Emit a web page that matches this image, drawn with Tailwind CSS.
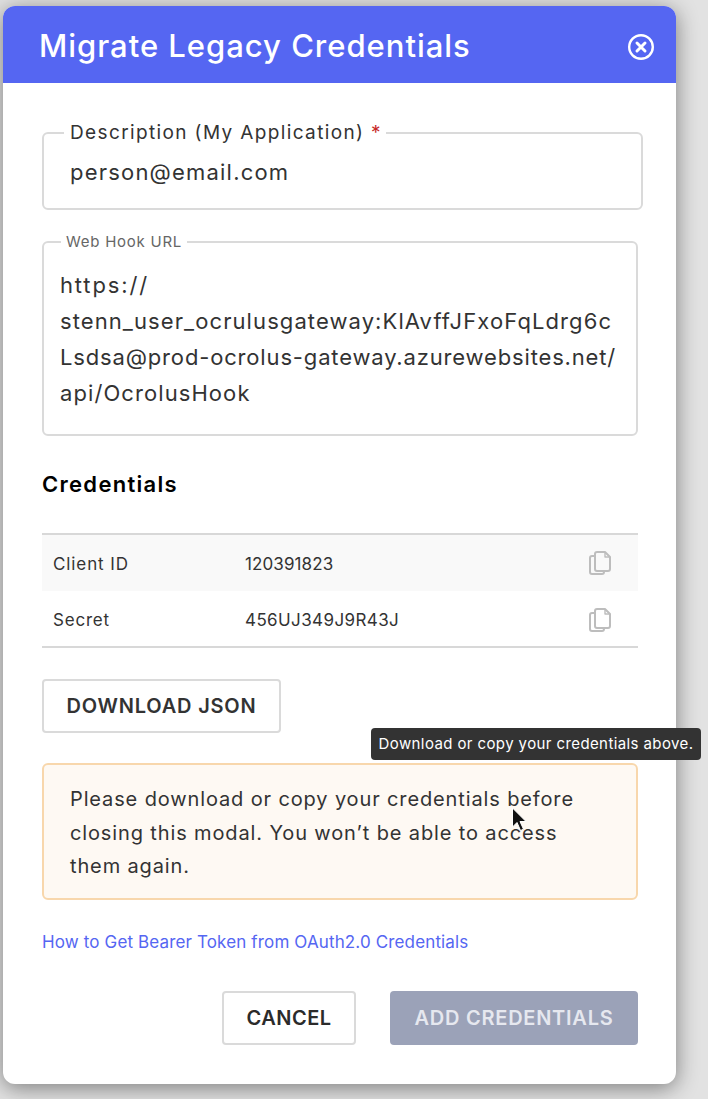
<!DOCTYPE html>
<html>
<head>
<meta charset="utf-8">
<script src="https://cdn.jsdelivr.net/npm/@tailwindcss/browser@4"></script>
</head>
<body class="m-0 h-[1099px] w-[708px] overflow-hidden bg-[#e2e2e2] font-['Inter',sans-serif] text-[#333333]">
<div class="relative h-[1099px] w-[708px] pl-[3px] pt-[6px]">
  <div class="flex h-[1078px] w-[673px] flex-col overflow-hidden rounded-[12px] bg-white shadow-[0_4px_22px_rgba(0,0,0,0.45)]">
    <header class="flex h-[77px] shrink-0 items-center justify-between bg-[#5566f2] pl-[36px] pr-[21px] pt-[4px]">
      <h1 class="text-[31px] font-medium tracking-[0.98px] text-white">Migrate Legacy Credentials</h1>
      <svg width="28" height="28" viewBox="0 0 28 28" fill="none" stroke="white" stroke-width="2.4" stroke-linecap="round"><circle cx="14" cy="14" r="11.8"/><path d="M10 10l8 8M18 10l-8 8" stroke-width="3"/></svg>
    </header>
    <main class="flex flex-1 flex-col pl-[39px] pr-[38px] pt-[49px]">
      <div class="relative flex h-[78px] w-[601px] items-center rounded-[6px] border-2 border-[#dadada] pl-[26px] pt-[2px] text-[22px] tracking-[1.2px]">
        person@email.com
        <span class="absolute left-[20px] top-[-12px] bg-white pl-[6px] pr-[4px] text-[19px] leading-[22px] tracking-[1.37px]">Description (My Application) <span class="text-[#c62828]">*</span></span>
      </div>
      <div class="relative mt-[31px] h-[195px] w-[596px] rounded-[6px] border-2 border-[#dadada] pl-[16px] pt-[24px] text-[22px] leading-[36px]">
        <div class="tracking-[1.85px]">https://</div>
        <div class="tracking-[1.09px]">stenn_user_ocrulusgateway:KlAvffJFxoFqLdrg6c</div>
        <div class="tracking-[0.84px]">Lsdsa@prod-ocrolus-gateway.azurewebsites.net/</div>
        <div class="tracking-[1.08px]">api/OcrolusHook</div>
        <span class="absolute left-[17px] top-[-10px] bg-white px-[5px] text-[15px] leading-[18px] tracking-[0.75px] text-[#666666]">Web Hook URL</span>
      </div>
      <h2 class="mt-[34px] text-[22px] font-semibold leading-[28px] tracking-[1.3px] text-black">Credentials</h2>
      <div class="mt-[35px] w-[596px] border-y-2 border-[#d8d8d8] text-[17px]">
        <div class="flex h-[56px] items-center bg-[#f9f9f9] pl-[11px] pr-[26px] pt-[3px]">
          <span class="w-[192px] tracking-[0.9px]">Client ID</span><span class="flex-1 tracking-[0.1px]">120391823</span>
          <svg class="-mt-[2px]" width="23" height="25" viewBox="0 0 23 25" fill="none" stroke="#bdbdbd" stroke-width="2" stroke-linejoin="round"><path d="M6 5H3a2 2 0 0 0-2 2v14a2 2 0 0 0 2 2h10a2 2 0 0 0 2-2v-1"/><path d="M8 1h8l5 5v12a2 2 0 0 1-2 2H8a2 2 0 0 1-2-2V3a2 2 0 0 1 2-2z"/><path d="M16 1v5h5" stroke-width="1.4"/></svg>
        </div>
        <div class="flex h-[55px] items-center pl-[11px] pr-[26px] pt-[5px]">
          <span class="w-[192px] tracking-[0.8px]">Secret</span><span class="flex-1 tracking-[0.4px]">456UJ349J9R43J</span>
          <svg class="-mt-[2px]" width="23" height="25" viewBox="0 0 23 25" fill="none" stroke="#bdbdbd" stroke-width="2" stroke-linejoin="round"><path d="M6 5H3a2 2 0 0 0-2 2v14a2 2 0 0 0 2 2h10a2 2 0 0 0 2-2v-1"/><path d="M8 1h8l5 5v12a2 2 0 0 1-2 2H8a2 2 0 0 1-2-2V3a2 2 0 0 1 2-2z"/><path d="M16 1v5h5" stroke-width="1.4"/></svg>
        </div>
      </div>
      <button class="mt-[31px] h-[54px] w-[239px] rounded-[4px] border-2 border-[#dadada] bg-white text-[20px] font-semibold tracking-[0.8px] text-[#333333]">DOWNLOAD JSON</button>
      <div class="mt-[30px] h-[137px] w-[596px] rounded-[6px] border-2 border-[#f8d7ac] bg-[#fef9f3] pl-[26px] pt-[18px] text-[20px] leading-[33.5px] tracking-[0.87px]">
        <div>Please download or copy your credentials before</div>
        <div>closing this modal. You won’t be able to access</div>
        <div>them again.</div>
      </div>
      <a class="mt-[32px] text-[17px] leading-[20px] tracking-[0.14px] text-[#5566f2]">How to Get Bearer Token from OAuth2.0 Credentials</a>
      <div class="mt-[39px] flex w-[596px] justify-end gap-[34px]">
        <button class="h-[54px] w-[134px] rounded-[4px] border-2 border-[#dadada] bg-white text-[20px] font-semibold tracking-[0.5px] text-[#2b2b2b]">CANCEL</button>
        <button class="h-[54px] w-[248px] rounded-[4px] bg-[#9ba2b8] text-[20px] font-semibold tracking-[0.75px] text-[#e6e8ef]">ADD CREDENTIALS</button>
      </div>
    </main>
  </div>
  <div class="absolute left-[371px] top-[728px] flex h-[32px] w-[330px] items-center justify-center rounded-[4px] bg-[#333333] text-[15px] tracking-[0.4px] text-white">Download or copy your credentials above.</div>
  <svg class="absolute left-[511px] top-[807px]" width="18" height="28" viewBox="0 0 18 28"><path d="M1.5 1v19l4.5-4.5 3.5 8 3-1.3-3.5-7.7h6z" fill="#111" stroke="white" stroke-width="1"/></svg>
</div>
</body>
</html>
